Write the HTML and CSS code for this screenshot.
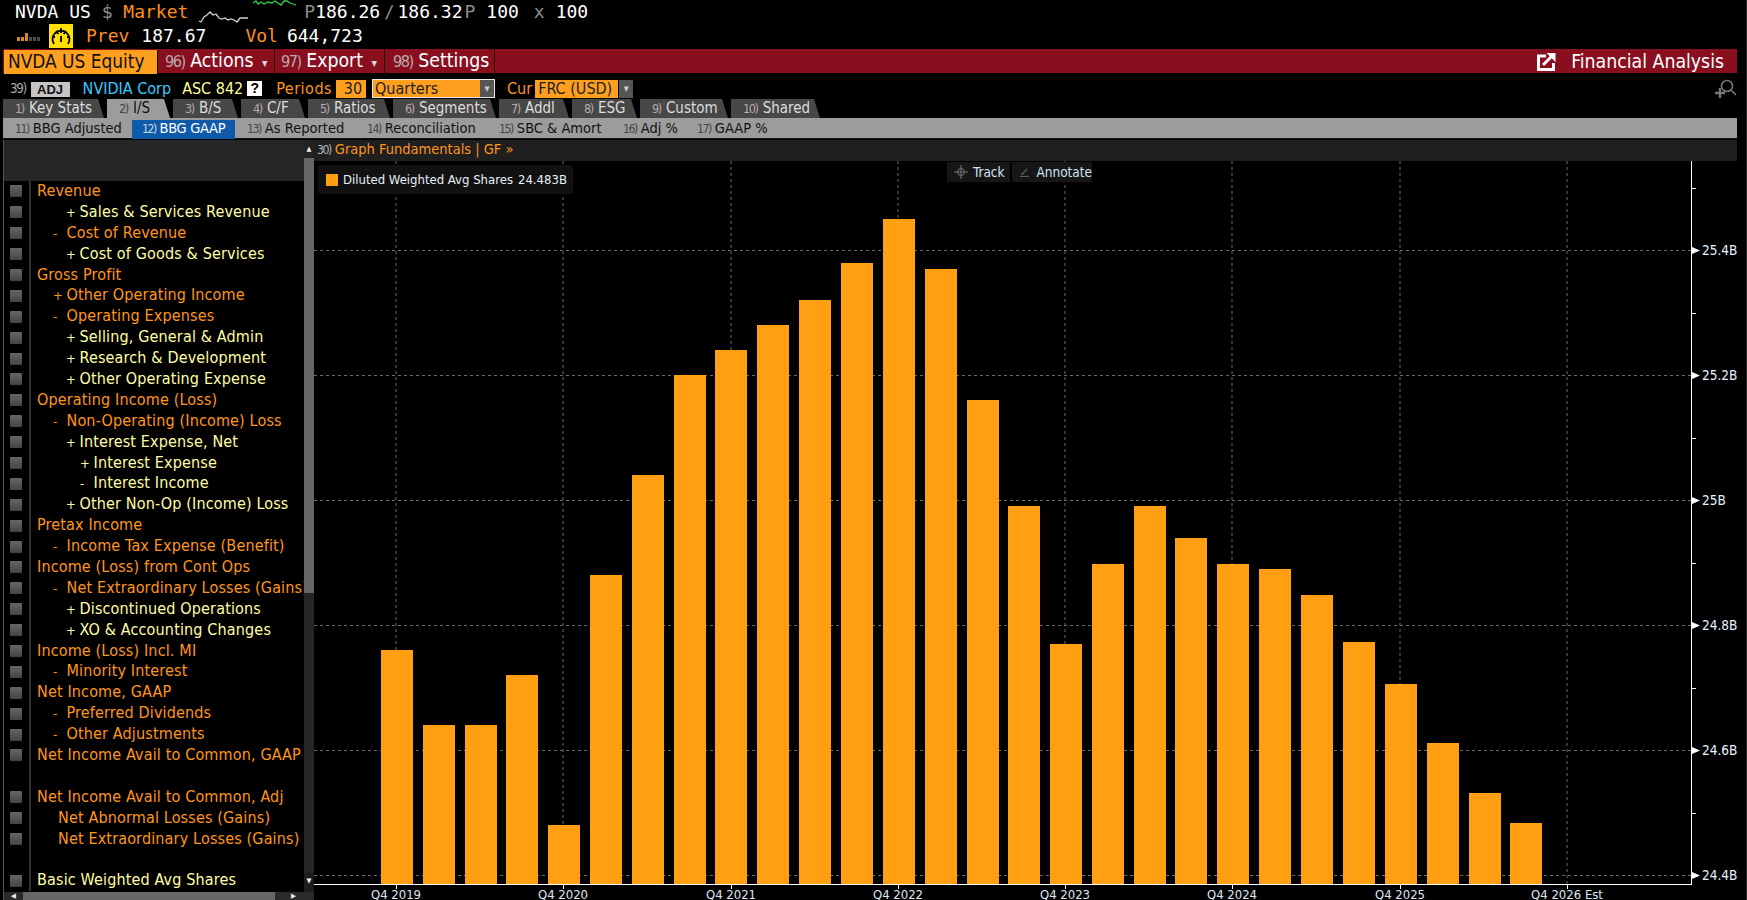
FILE: index.html
```html
<!DOCTYPE html>
<html lang="en">
<head>
<meta charset="utf-8">
<title>NVDA US Equity - Financial Analysis</title>
<link rel="stylesheet" href="styles.css">
</head>
<body>
<header class="quote">
  <div class="quote-line first">
    <span class="wh">NVDA US</span><span class="gy sp1">$</span><span class="or sp1">Market</span>
    <svg class="spark" width="100" height="24" viewBox="198 0 100 24"><polyline class="spark-w" points="199,21 201,22 204,17 207,15 210,12 213,15 216,14 219,18 222,19 225,18 228,20 231,19 234,20 237,22 240,18 243,18 248,18"/><polyline class="spark-g" points="253,3 256,1 258,4 261,2 264,4 268,2 272,3 275,1 278,3 281,5 284,1 287,1 290,3 293,4 296,5"/></svg>
    <span class="gy m-p">P</span><span class="wh">186.26</span><span class="gy slash">/</span><span class="wh">186.32</span><span class="gy m-q">P</span><span class="wh m-s">100</span><span class="gy m-x">x</span><span class="wh m-x2">100</span>
  </div>
  <div class="quote-line second">
    <span class="sig"><i class="on"></i><i class="on"></i><i class="on hi"></i><i></i><i></i><i></i></span>
    <svg class="gauge" width="24" height="24" viewBox="0 0 24 24"><rect width="24" height="24" fill="#ffe000"/><path class="gauge-s" d="M5 20a8.500 8.500 0 1 1 14 0M12 4v5M7 7l2.500 3M17 7l-2.500 3M12 12v6M4 13h2M18 13h2"/></svg>
    <span class="or m-prev">Prev</span><span class="wh m-pv">187.67</span><span class="or m-vol">Vol</span><span class="wh m-pv2">644,723</span>
  </div>
</header>

<nav class="menu">
  <div class="menu-sec">NVDA US Equity</div>
  <div class="menu-item"><span class="n">96)</span> Actions <span class="caret">▾</span></div>
  <div class="menu-item"><span class="n">97)</span> Export <span class="caret">▾</span></div>
  <div class="menu-item last"><span class="n">98)</span> Settings</div>
  <div class="menu-fill">
    <svg class="ext" width="19" height="18" viewBox="0 0 19 18"><path class="ext-s" d="M9 3H1.500v13.500h15V10"/><path class="ext-a" d="M6 12L14 4"/><path class="ext-f" d="M9.500 0H18.500V9z"/></svg>
    <span class="fa">Financial Analysis</span>
  </div>
</nav>

<section class="opts">
  <span class="n nw o39">39)</span>
  <span class="adj">ADJ</span>
  <span class="cy">NVIDIA Corp</span>
  <span class="asc">ASC 842</span>
  <span class="qm">?</span>
  <span class="org per">Periods</span>
  <span class="field f30">30</span>
  <span class="combo"><span class="combo-t">Quarters</span><span class="arr">▾</span></span>
  <span class="org cur">Cur</span>
  <span class="field frc">FRC (USD)</span><span class="arr arr2">▾</span>
  <svg class="zoomi" width="22" height="20" viewBox="0 0 22 20"><path class="zoom-s" d="M5 9v10M0 14h10"/><circle class="zoom-c" cx="12" cy="7" r="5.500"/><path class="zoom-c" d="M16 11l5 5"/></svg>
</section>

<nav class="tabs">
  <div class="tab"><span class="n">1)</span> Key Stats</div>
  <div class="tab act"><span class="n">2)</span> I/S</div>
  <div class="tab"><span class="n">3)</span> B/S</div>
  <div class="tab"><span class="n">4)</span> C/F</div>
  <div class="tab"><span class="n">5)</span> Ratios</div>
  <div class="tab"><span class="n">6)</span> Segments</div>
  <div class="tab"><span class="n">7)</span> Addl</div>
  <div class="tab"><span class="n">8)</span> ESG</div>
  <div class="tab"><span class="n">9)</span> Custom</div>
  <div class="tab"><span class="n">10)</span> Shared</div>
</nav>

<nav class="subs">
  <div class="sub"><span class="n">11)</span> BBG Adjusted</div>
  <div class="sub sel"><span class="n">12)</span> BBG GAAP</div>
  <div class="sub"><span class="n">13)</span> As Reported</div>
  <div class="sub"><span class="n">14)</span> Reconciliation</div>
  <div class="sub"><span class="n">15)</span> SBC &amp; Amort</div>
  <div class="sub"><span class="n">16)</span> Adj %</div>
  <div class="sub"><span class="n">17)</span> GAAP %</div>
</nav>

<main class="main">
  <aside class="side">
    <div class="side-in">
      <div class="side-body">
        <div class="side-head"></div>
        <ul class="list">
          <li class="row o"><i class="ck"></i><span class="lb">Revenue</span></li>
          <li class="row y l2"><i class="ck"></i><span class="lb"><b>+</b>Sales &amp; Services Revenue</span></li>
          <li class="row o l1"><i class="ck"></i><span class="lb"><b>-</b>Cost of Revenue</span></li>
          <li class="row y l2"><i class="ck"></i><span class="lb"><b>+</b>Cost of Goods &amp; Services</span></li>
          <li class="row o"><i class="ck"></i><span class="lb">Gross Profit</span></li>
          <li class="row o l1"><i class="ck"></i><span class="lb"><b>+</b>Other Operating Income</span></li>
          <li class="row o l1"><i class="ck"></i><span class="lb"><b>-</b>Operating Expenses</span></li>
          <li class="row y l2"><i class="ck"></i><span class="lb"><b>+</b>Selling, General &amp; Admin</span></li>
          <li class="row y l2"><i class="ck"></i><span class="lb"><b>+</b>Research &amp; Development</span></li>
          <li class="row y l2"><i class="ck"></i><span class="lb"><b>+</b>Other Operating Expense</span></li>
          <li class="row o"><i class="ck"></i><span class="lb">Operating Income (Loss)</span></li>
          <li class="row o l1"><i class="ck"></i><span class="lb"><b>-</b>Non-Operating (Income) Loss</span></li>
          <li class="row y l2"><i class="ck"></i><span class="lb"><b>+</b>Interest Expense, Net</span></li>
          <li class="row y l3"><i class="ck"></i><span class="lb"><b>+</b>Interest Expense</span></li>
          <li class="row y l3"><i class="ck"></i><span class="lb"><b>-</b>Interest Income</span></li>
          <li class="row y l2"><i class="ck"></i><span class="lb"><b>+</b>Other Non-Op (Income) Loss</span></li>
          <li class="row o"><i class="ck"></i><span class="lb">Pretax Income</span></li>
          <li class="row o l1"><i class="ck"></i><span class="lb"><b>-</b>Income Tax Expense (Benefit)</span></li>
          <li class="row o"><i class="ck"></i><span class="lb">Income (Loss) from Cont Ops</span></li>
          <li class="row o l1"><i class="ck"></i><span class="lb"><b>-</b>Net Extraordinary Losses (Gains)</span></li>
          <li class="row y l2"><i class="ck"></i><span class="lb"><b>+</b>Discontinued Operations</span></li>
          <li class="row y l2"><i class="ck"></i><span class="lb"><b>+</b>XO &amp; Accounting Changes</span></li>
          <li class="row o"><i class="ck"></i><span class="lb">Income (Loss) Incl. MI</span></li>
          <li class="row o l1"><i class="ck"></i><span class="lb"><b>-</b>Minority Interest</span></li>
          <li class="row o"><i class="ck"></i><span class="lb">Net Income, GAAP</span></li>
          <li class="row o l1"><i class="ck"></i><span class="lb"><b>-</b>Preferred Dividends</span></li>
          <li class="row o l1"><i class="ck"></i><span class="lb"><b>-</b>Other Adjustments</span></li>
          <li class="row o"><i class="ck"></i><span class="lb">Net Income Avail to Common, GAAP</span></li>
          <li class="row blank"><i class="ck-none"></i><span class="lb"></span></li>
          <li class="row o"><i class="ck"></i><span class="lb">Net Income Avail to Common, Adj</span></li>
          <li class="row o ln"><i class="ck"></i><span class="lb">Net Abnormal Losses (Gains)</span></li>
          <li class="row o ln"><i class="ck"></i><span class="lb">Net Extraordinary Losses (Gains)</span></li>
          <li class="row blank"><i class="ck-none"></i><span class="lb"></span></li>
          <li class="row y"><i class="ck"></i><span class="lb">Basic Weighted Avg Shares</span></li>
        </ul>
      </div>
      <div class="vbar">
        <div class="vbar-up">▲</div>
        <div class="vbar-th"></div>
        <div class="vbar-tr"></div>
        <div class="vbar-dn">▼</div>
      </div>
    </div>
    <div class="hbar"><span class="hbar-a">◀</span><span class="hbar-th"></span><span class="hbar-a">▶</span></div>
  </aside>

  <section class="chart">
    <div class="chart-head"><span class="n">30)</span> Graph Fundamentals | GF »</div>
    <div class="plot">
      <svg class="plot-svg" width="1433" height="739" viewBox="314 161 1433 739">
        <g class="grid">
          <path d="M731 161V884M898 161V884M1065 161V884M1232 161V884M1400 161V884M1567 161V884M396 161V884M563 161V884"/>
          <path d="M314 250.500H1691M314 375.500H1691M314 500.500H1691M314 625.500H1691M314 750.500H1691M314 875.500H1691"/>
        </g>
        <g class="bars">
          <rect x="381" y="650" width="32" height="234"/>
          <rect x="423" y="725" width="32" height="159"/>
          <rect x="465" y="725" width="32" height="159"/>
          <rect x="506" y="675" width="32" height="209"/>
          <rect x="548" y="825" width="32" height="59"/>
          <rect x="590" y="575" width="32" height="309"/>
          <rect x="632" y="475" width="32" height="409"/>
          <rect x="674" y="375" width="32" height="509"/>
          <rect x="715" y="350" width="32" height="534"/>
          <rect x="757" y="325" width="32" height="559"/>
          <rect x="799" y="300" width="32" height="584"/>
          <rect x="841" y="263" width="32" height="621"/>
          <rect x="883" y="219" width="32" height="665"/>
          <rect x="925" y="269" width="32" height="615"/>
          <rect x="967" y="400" width="32" height="484"/>
          <rect x="1008" y="506" width="32" height="378"/>
          <rect x="1050" y="644" width="32" height="240"/>
          <rect x="1092" y="564" width="32" height="320"/>
          <rect x="1134" y="506" width="32" height="378"/>
          <rect x="1175" y="538" width="32" height="346"/>
          <rect x="1217" y="564" width="32" height="320"/>
          <rect x="1259" y="569" width="32" height="315"/>
          <rect x="1301" y="595" width="32" height="289"/>
          <rect x="1343" y="642" width="32" height="242"/>
          <rect x="1385" y="684" width="32" height="200"/>
          <rect x="1427" y="743" width="32" height="141"/>
          <rect x="1469" y="793" width="32" height="91"/>
          <rect x="1510" y="823" width="32" height="61"/>
        </g>
        <path class="axis" d="M1691.500 161V885M314 884.500H1691M396.500 885v4M563.500 885v4M731.500 885v4M898.500 885v4M1065.500 885v4M1232.500 885v4M1400.500 885v4M1567.500 885v4M1692 188.500h4M1692 313.500h4M1692 438.500h4M1692 563.500h4M1692 688.500h4M1692 813.500h4"/>
        <g class="ticks">
          <path d="M1692 247l8 3.500-8 3.500zM1692 372l8 3.500-8 3.500zM1692 497l8 3.500-8 3.500zM1692 622l8 3.500-8 3.500zM1692 747l8 3.500-8 3.500zM1692 872l8 3.500-8 3.500z"/>
        </g>
        <g class="ylab">
          <text x="1702" y="255">25.4B</text>
          <text x="1702" y="380">25.2B</text>
          <text x="1702" y="505">25B</text>
          <text x="1702" y="630">24.8B</text>
          <text x="1702" y="755">24.6B</text>
          <text x="1702" y="880">24.4B</text>
        </g>
        <g class="xlab">
          <text x="396" y="898.500">Q4 2019</text>
          <text x="563" y="898.500">Q4 2020</text>
          <text x="731" y="898.500">Q4 2021</text>
          <text x="898" y="898.500">Q4 2022</text>
          <text x="1065" y="898.500">Q4 2023</text>
          <text x="1232" y="898.500">Q4 2024</text>
          <text x="1400" y="898.500">Q4 2025</text>
          <text x="1567" y="898.500">Q4 2026 Est</text>
        </g>
      </svg>
      <div class="legend"><i class="swatch"></i><span>Diluted Weighted Avg Shares</span><span>24.483B</span></div>
      <div class="tools">
        <div class="tool track">
          <svg width="14" height="14" viewBox="0 0 14 14"><circle class="tool-s" cx="7" cy="7" r="3.500"/><path class="tool-s" d="M7 0v14M0 7h14"/></svg>
          <span>Track</span>
        </div>
        <div class="tool anno">
          <svg width="14" height="14" viewBox="0 0 14 14"><path class="tool-s" d="M3 10l7-7 1 1-7 7zM1 13h12"/></svg>
          <span>Annotate</span>
        </div>
      </div>
    </div>
  </section>
</main>
</body>
</html>
```
FILE: styles.css
```css
* { box-sizing: border-box; }
html, body { margin: 0; padding: 0; background: #000; }
body {
  width: 1747px;
  height: 900px;
  overflow: hidden;
  font-family: "DejaVu Sans Condensed", "DejaVu Sans", sans-serif;
  font-stretch: condensed;
  font-size: 16px;
  color: #fff;
  position: relative;
  border-right: 1px solid #2a2a2a;
}
i, b { font-style: normal; font-weight: normal; }

/* quote header */
.quote { height: 49px; font-family: "DejaVu Sans Mono", monospace; font-size: 18px; font-stretch: normal; }
.quote-line { height: 24px; display: flex; align-items: center; white-space: pre; line-height: 24px; }
.quote-line.first { padding-left: 15px; }
.wh { color: #fff; }
.gy { color: #8d8d8d; }
.or { color: #ff8f1f; }
.sp1 { margin-left: 10.800px; }
.spark { margin-left: 10px; flex: none; }
.spark-w, .spark-g { fill: none; stroke-width: 1.300; }
.spark-w { stroke: #d0d0d0; }
.spark-g { stroke: #2fd24a; }
.m-p { margin-left: 6px; }
.slash { margin-left: 4px; margin-right: 4px; font-size: 17px; letter-spacing: -1px; }
.m-q { margin-left: 2px; }
.m-s { margin-left: 11px; }
.m-x { margin-left: 15px; }
.m-x2 { margin-left: 11px; }
.quote-line.second { padding-left: 17px; }
.sig { display: flex; gap: 1px; width: 32px; align-items: flex-end; height: 10px; flex: none; }
.sig i { width: 3px; height: 4px; background: #4c4c4c; }
.sig i.on { background: #d98a1a; height: 4px; }
.sig i.on.hi { height: 8px; }
.gauge { flex: none; }
.gauge-s { fill: none; stroke: #000; stroke-width: 1.800; }
.m-prev { margin-left: 13px; }
.m-pv { margin-left: 12px; }
.m-vol { margin-left: 39px; }
.m-pv2 { margin-left: 9px; }

/* menu bar */
.menu {
  margin-left: 3px;
  width: 1734px;
  height: 24px;
  background: #890f1f;
  display: grid;
  grid-template-columns: 156px 116px 110px 110px 1fr;
  font-size: 19.300px;
  line-height: 24px;
  white-space: nowrap;
}
.menu-sec { background: #ff9f1e; color: #111; margin: 1px; padding-left: 4px; font-size: 18.900px; line-height: 22px; border-right: 1px solid #000; }
.menu-item { padding-left: 6px; border-right: 1px solid #300; color: #fff; }
.menu-item.last { padding-left: 8px; }
.menu-fill { display: flex; align-items: center; justify-content: flex-end; padding-right: 13px; }
.n { font-size: .84em; letter-spacing: -1.500px; color: #b9a9ad; }
.caret { font-size: 12px; margin-left: 3px; color: #d8d8d8; }
.ext { margin-right: 15px; }
.ext-s { fill: none; stroke: #fff; stroke-width: 3; }
.ext-a { fill: none; stroke: #fff; stroke-width: 3; }
.ext-f { fill: #fff; }
.fa { color: #fff; }

/* options row */
.opts { height: 20px; margin-top: 6px; display: flex; align-items: flex-start; white-space: nowrap; position: relative; font-size: 16px; line-height: 19px; }
.o39 { margin-left: 10px; color: #a8a8a8; }
.adj { margin-left: 5px; margin-top: 3px; width: 39px; height: 15px; background: #c4c4c4; color: #111; font-family: "Liberation Sans", sans-serif; font-weight: 700; font-size: 13px; line-height: 15px; text-align: center; }
.cy { margin-left: 13px; color: #33ccff; }
.asc { margin-left: 11px; color: #ffff99; }
.qm { margin-left: 4px; margin-top: 2px; width: 15px; height: 15px; background: #fff; color: #000; font-family: "Liberation Sans", sans-serif; font-weight: 700; font-size: 14px; line-height: 15px; text-align: center; }
.org { color: #ff961c; }
.per { margin-left: 14px; letter-spacing: .5px; }
.field { background: #ff9f1e; color: #222; height: 18px; line-height: 18px; margin-top: 1px; }
.f30 { margin-left: 4px; width: 30px; text-align: right; padding-right: 4px; }
.combo { margin-left: 6px; width: 123px; height: 19px; display: flex; justify-content: space-between; background: #ff9f1e; border: 1px solid #e8e8e8; color: #222; line-height: 17px; padding-left: 2px; }
.combo-t { flex: 1; }
.arr { width: 14px; background: #555; color: #ccc; font-size: 11px; line-height: 18px; text-align: center; display: block; }
.cur { margin-left: 12px; }
.frc { margin-left: 3px; width: 83px; padding-left: 3px; }
.arr2 { margin-left: 1px; margin-top: 1px; height: 18px; }
.zoomi { position: absolute; right: 9px; top: 0; }
.zoom-s { fill: none; stroke: #777; stroke-width: 2.400; }
.zoom-c { fill: none; stroke: #777; stroke-width: 1.600; }

/* tabs */
.tabs {
  margin-left: 3px;
  height: 19px;
  display: grid;
  grid-template-columns: 104px 66px 68px 67px 85px 106px 73px 68px 91px 92px;
  grid-template-rows: 19px;
  justify-content: start;
  font-size: 15px;
  line-height: 19px;
}
.tab { background: #474747; color: #ddd; padding-left: 12px; margin-right: 3px; clip-path: polygon(0 0, calc(100% - 6px) 0, 100% 100%, 0 100%); white-space: nowrap; }
.tab.act { background: #9c9c9c; color: #111; }
.tab.act .n { color: #444; }
.tab .n { margin-right: 1px; }

/* sub tabs */
.subs {
  margin-left: 3px;
  width: 1734px;
  height: 21px;
  background: #9c9c9c;
  border-bottom: 1px solid #111;
  display: grid;
  grid-template-columns: 129px 103px 120px 132px 124px 74px 100px;
  justify-content: start;
  font-size: 14.500px;
  color: #111;
  line-height: 20px;
  white-space: nowrap;
}
.sub { padding-left: 12px; }
.sub .n { color: #454545; }
.sub.sel { background: #0f5aa8; color: #fff; padding-left: 10px; margin: 2px 0 0; line-height: 17px; letter-spacing: -.3px; }
.sub.sel .n { color: #c8d8ea; }

/* main split */
.main { display: flex; height: 761px; margin-left: 3px; padding-top: 1px; }
.side { width: 311px; flex: none; display: flex; flex-direction: column; border-left: 1px solid #555; }
.side-in { height: 752px; display: flex; }
.side-body { width: 300px; flex: none; overflow: hidden; }
.side-head { height: 41px; background: #262626; }
.list { list-style: none; margin: 0; padding: 0; letter-spacing: .15px; }
.row { height: 20.900px; display: flex; align-items: center; line-height: 20px; }
.row.o { color: #ff961c; }
.row.y { color: #ffffa6; }
.ck { width: 12px; height: 12px; margin-left: 6px; flex: none; background: linear-gradient(#666, #444); border-radius: 1px; }
.ck-none { width: 12px; margin-left: 6px; flex: none; }
.lb { margin-left: 7px; border-left: 2px solid #333; height: 100%; padding-left: 6px; white-space: nowrap; flex: 1; overflow: hidden; }
.lb b { display: inline-block; width: 13.500px; font-size: 13px; }
.l1 .lb { padding-left: 22px; }
.l2 .lb { padding-left: 35px; }
.l3 .lb { padding-left: 49px; }
.ln .lb { padding-left: 27px; }
.vbar { width: 10px; flex: none; display: flex; flex-direction: column; }
.vbar-up { height: 18px; background: #222; color: #eee; font-size: 7px; line-height: 18px; text-align: center; }
.vbar-th { height: 435px; background: #666; }
.vbar-tr { flex: 1; background: #262626; }
.vbar-dn { height: 19px; background: #1c1c1c; color: #eee; font-size: 7px; line-height: 17px; text-align: center; }
.hbar { height: 8px; background: #2a2a2a; display: flex; overflow: hidden; color: #eee; font-size: 7px; line-height: 8px; }
.hbar-a { width: 19px; text-align: center; }
.hbar-a:last-child { width: 37px; }
.hbar-th { width: 252px; background: #666; }

/* chart */
.chart { flex: 1; min-width: 0; display: flex; flex-direction: column; }
.chart-head { height: 21px; width: 1423px; background: #1f1f1f; color: #ff961c; padding-left: 3px; font-size: 14.500px; line-height: 19px; white-space: nowrap; }
.chart-head .n { color: #b5b5c0; }
.plot { flex: 1; position: relative; overflow: hidden; }
.plot-svg { display: block; }
.grid path { fill: none; stroke: #6a6a6a; stroke-width: 1; stroke-dasharray: 3 3; }
.bars rect { fill: #ff9f11; }
.axis { fill: none; stroke: #fff; stroke-width: 1; }
.ticks path { fill: #fff; }
.ylab text { fill: #e6f2ff; font-size: 13.500px; }
.xlab text { fill: #dde8f2; font-size: 13px; text-anchor: middle; }
.legend { position: absolute; left: 4px; top: 4px; width: 255px; height: 29px; background: #111; border-radius: 3px; display: flex; align-items: center; gap: 5px; padding-left: 8px; color: #e8f2fa; font-size: 13px; white-space: nowrap; }
.swatch { width: 12px; height: 12px; background: #ff9f11; flex: none; }
.tools { position: absolute; left: 633px; top: 1px; display: flex; gap: 2px; }
.tool { height: 20px; background: #161616; display: flex; align-items: center; color: #cfe4f4; font-size: 13.500px; white-space: nowrap; }
.track { width: 63px; padding-left: 7px; gap: 5px; }
.anno { width: 80px; padding-left: 7px; gap: 7px; }
.tool-s { fill: none; stroke: #777; stroke-width: 1; }
```
